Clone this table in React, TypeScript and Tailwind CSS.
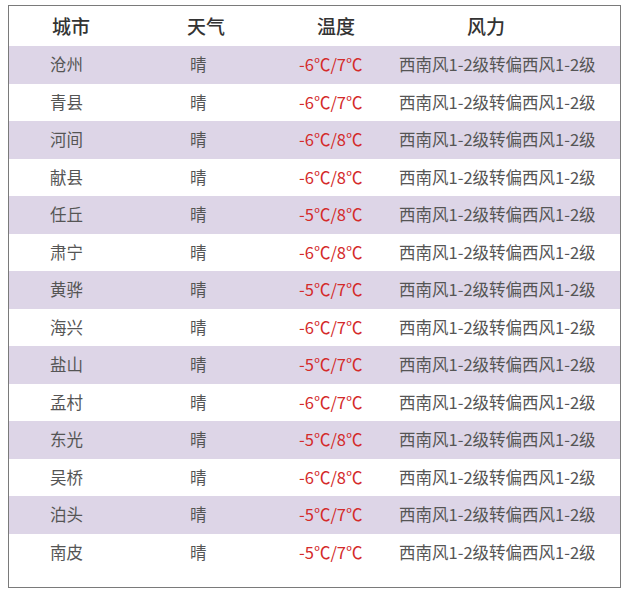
import React from "react";

const rows: [string, string, string][] = [
  ["沧州", "-6", "7"],
  ["青县", "-6", "7"],
  ["河间", "-6", "8"],
  ["献县", "-6", "8"],
  ["任丘", "-5", "8"],
  ["肃宁", "-6", "8"],
  ["黄骅", "-5", "7"],
  ["海兴", "-6", "7"],
  ["盐山", "-5", "7"],
  ["孟村", "-6", "7"],
  ["东光", "-5", "8"],
  ["吴桥", "-6", "8"],
  ["泊头", "-5", "7"],
  ["南皮", "-5", "7"],
];

export default function App() {
  return (
    <div className="w-[626px] h-[591px] bg-white pt-[5px] pl-[8px]" style={{ fontFamily: '"Noto Sans CJK SC", "Noto Sans", sans-serif' }}>
      <div className="w-[613px] h-[583px] border border-[#7a7a7a] bg-white pb-[15px]">
        <div className="grid grid-cols-[140px_109px_100px_1fr] pl-[41px] h-[40px] items-center text-[19px] font-medium text-[#333333]">
          <div className="ml-[2px]">城市</div>
          <div className="-ml-[3px]">天气</div>
          <div className="ml-[18px]">温度</div>
          <div className="ml-[68px]">风力</div>
        </div>
        {rows.map(([city, lo, hi], i) => (
          <div
            key={city}
            className={`grid grid-cols-[140px_109px_100px_1fr] pl-[41px] h-[37.5px] items-center text-[16.5px] text-[#555555] ${i % 2 === 0 ? "bg-[#ddd5e7]" : "bg-white"}`}
          >
            <div>{city}</div>
            <div>晴</div>
            <div className="text-[#d42a2a] whitespace-nowrap">{`${lo}℃/${hi}℃`}</div>
            <div className="whitespace-nowrap">西南风1-2级转偏西风1-2级</div>
          </div>
        ))}
      </div>
    </div>
  );
}
